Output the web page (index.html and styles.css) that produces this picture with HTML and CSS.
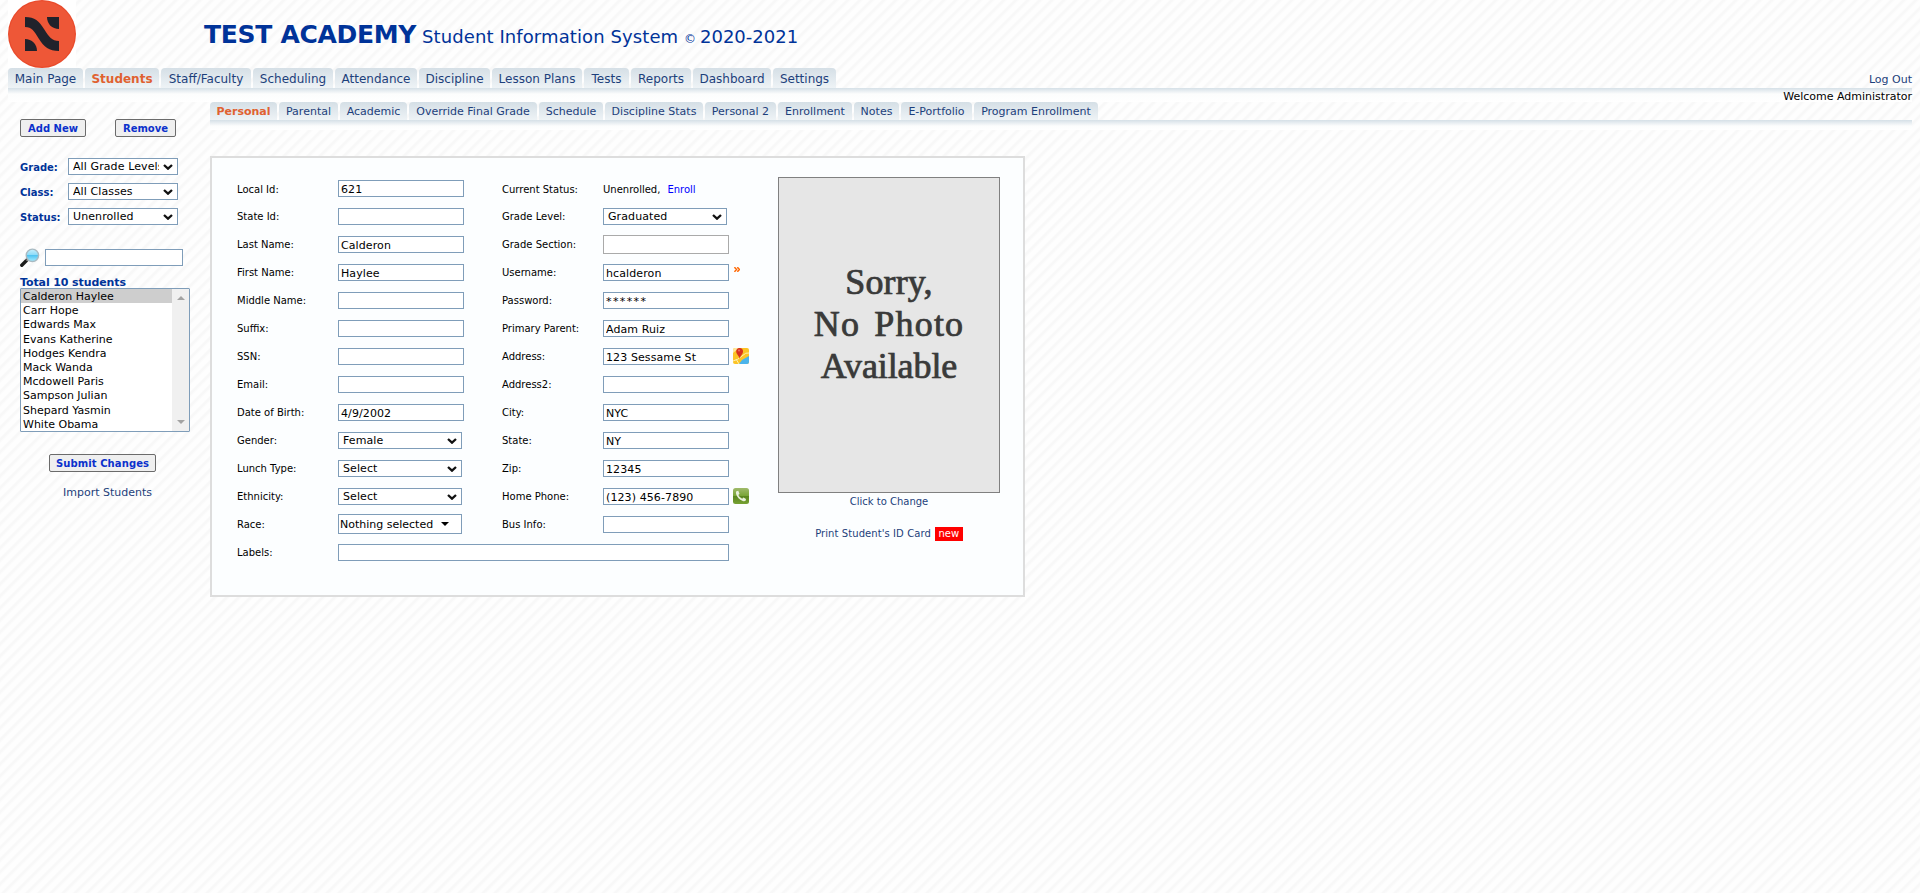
FILE: index.html
```html
<!DOCTYPE html>
<html lang="en">
<head>
<meta charset="utf-8">
<title>Student Information System</title>
<link rel="stylesheet" href="styles.css">
</head>
<body>
<svg class="defs" width="0" height="0">
  <symbol id="chev" viewBox="0 0 10 6"><path d="M1 1l4 3.7L9 1" fill="none" stroke="#111" stroke-width="2.3"/></symbol>
</svg>
<header class="header">
  <svg class="logo" width="68" height="68" viewBox="0 0 68 68">
    <circle cx="34" cy="34" r="34" fill="#e94a2b"/><circle cx="34" cy="34" r="32.8" fill="#ee5737"/>
    <path d="M17 17C27 17 31 21 36 29C41 37 44 41 51 41V51C41 51 36 47 31 39C26 31 24 27 17 27Z" fill="#20222b"/>
    <path d="M39 17H51V29C44 29 39 24 39 17Z" fill="#20222b"/>
    <path d="M17 39C24 39 29 44 29 51H17Z" fill="#20222b"/>
  </svg>
  <div class="title"><span class="school">TEST ACADEMY</span><span class="system">Student Information System</span><span class="copy">©</span><span class="year">2020-2021</span></div>
</header>
<nav class="mainnav">
  <a class="w75">Main Page</a><a class="w74 on">Students</a><a class="w90">Staff/Faculty</a><a class="w80">Scheduling</a><a class="w82">Attendance</a><a class="w71">Discipline</a><a class="w90">Lesson Plans</a><a class="w45">Tests</a><a class="w60">Reports</a><a class="w78">Dashboard</a><a class="w63">Settings</a>
  <span class="logout">Log Out</span>
</nav>
<div class="mainline"><span>Welcome Administrator</span></div>
<div class="body">
  <aside class="side">
    <div class="buttons"><button class="w66">Add New</button><button class="w61">Remove</button></div>
    <div class="filter"><label>Grade:</label><div class="sel w110"><select><option>All Grade Levels</option></select><svg><use href="#chev"/></svg></div></div>
    <div class="filter"><label>Class:</label><div class="sel w110"><select><option>All Classes</option></select><svg><use href="#chev"/></svg></div></div>
    <div class="filter"><label>Status:</label><div class="sel w110"><select><option>Unenrolled</option></select><svg><use href="#chev"/></svg></div></div>
    <div class="search">
      <svg width="20" height="20" viewBox="0 0 20 20">
        <defs><linearGradient id="lens" x1="0" y1="0" x2="0" y2="1"><stop offset="0" stop-color="#c8effc"/><stop offset=".45" stop-color="#8fdcf8"/><stop offset=".5" stop-color="#4fc3f1"/><stop offset="1" stop-color="#a5ecff"/></linearGradient></defs>
        <path d="M1.8 17.2L7 12" stroke="#1c1c1c" stroke-width="3.4" stroke-linecap="round"/>
        <path d="M5.5 11.5L8 13" stroke="#999" stroke-width="1"/>
        <circle cx="12.4" cy="7.3" r="6.2" fill="url(#lens)" stroke="#a9bac2" stroke-width="1.4"/>
      </svg>
      <input type="text">
    </div>
    <div class="total">Total 10 students</div>
    <div class="list">
      <ul><li class="picked">Calderon Haylee</li><li>Carr Hope</li><li>Edwards Max</li><li>Evans Katherine</li><li>Hodges Kendra</li><li>Mack Wanda</li><li>Mcdowell Paris</li><li>Sampson Julian</li><li>Shepard Yasmin</li><li>White Obama</li></ul>
      <div class="bar"><svg width="8" height="4"><path d="M0 4L4 0L8 4Z" fill="#a3a3a3"/></svg><svg width="8" height="4"><path d="M0 0L4 4L8 0Z" fill="#a3a3a3"/></svg></div>
    </div>
    <button class="submit">Submit Changes</button>
    <div class="import">Import Students</div>
  </aside>
  <main class="main">
    <nav class="subnav">
      <a class="w67 on">Personal</a><a class="w59">Parental</a><a class="w67">Academic</a><a class="w128">Override Final Grade</a><a class="w64">Schedule</a><a class="w98">Discipline Stats</a><a class="w71">Personal 2</a><a class="w74">Enrollment</a><a class="w45">Notes</a><a class="w71">E-Portfolio</a><a class="w124">Program Enrollment</a>
    </nav>
    <div class="subline"></div>
    <section class="panel">
      <div class="form">
        <div class="cols">
          <div class="col">
            <div class="row first"><label>Local Id:</label><input type="text" value="621"></div>
            <div class="row"><label>State Id:</label><input type="text"></div>
            <div class="row"><label>Last Name:</label><input type="text" value="Calderon"></div>
            <div class="row"><label>First Name:</label><input type="text" value="Haylee"></div>
            <div class="row"><label>Middle Name:</label><input type="text"></div>
            <div class="row"><label>Suffix:</label><input type="text"></div>
            <div class="row"><label>SSN:</label><input type="text"></div>
            <div class="row"><label>Email:</label><input type="text"></div>
            <div class="row"><label>Date of Birth:</label><input type="text" value="4/9/2002"></div>
            <div class="row"><label>Gender:</label><div class="sel w124"><select><option>Female</option></select><svg><use href="#chev"/></svg></div></div>
            <div class="row"><label>Lunch Type:</label><div class="sel w124"><select><option>Select</option></select><svg><use href="#chev"/></svg></div></div>
            <div class="row"><label>Ethnicity:</label><div class="sel w124"><select><option>Select</option></select><svg><use href="#chev"/></svg></div></div>
            <div class="row"><label>Race:</label><div class="multi"><span>Nothing selected</span><svg width="8" height="4"><path d="M0 0H8L4 4Z" fill="#000"/></svg></div></div>
          </div>
          <div class="col">
            <div class="row first"><label>Current Status:</label><span class="status">Unenrolled,<a>Enroll</a></span></div>
            <div class="row"><label>Grade Level:</label><div class="sel w124"><select><option>Graduated</option></select><svg><use href="#chev"/></svg></div></div>
            <div class="row"><label>Grade Section:</label><input type="text" class="section"></div>
            <div class="row"><label>Username:</label><input type="text" value="hcalderon"><svg class="more" width="6" height="5" viewBox="0 0 6 5"><path d="M.4 .2L2.5 2.5L.4 4.8M3.3 .2L5.4 2.5L3.3 4.8" fill="none" stroke="#f60" stroke-width="1.5"/></svg></div>
            <div class="row"><label>Password:</label><input type="text" class="stars" value="******"></div>
            <div class="row"><label>Primary Parent:</label><input type="text" value="Adam Ruiz"></div>
            <div class="row"><label>Address:</label><input type="text" value="123 Sessame St">
              <svg class="icon" width="16" height="16" viewBox="0 0 16 16"><rect width="16" height="16" rx="2" fill="#fcc425"/><path d="M0 5V2Q0 0 2 0H6Z" fill="#ffe79c"/><path d="M9 12L16 8V14Q16 16 14 16H6Z" fill="#4ab4ec"/><path d="M0 13Q5 12 9 8T16 5M6 16L3 11" stroke="#fff0ae" stroke-width="1" fill="none"/><path d="M6.600 11C6.400 8 3.200 6.500 3.200 3.600A3.400 3.600 0 0 1 10 3.600C10 6.500 6.900 8 6.600 11Z" fill="#d8321e"/><circle cx="6" cy="2.500" r="1" fill="#ec7263"/></svg></div>
            <div class="row"><label>Address2:</label><input type="text"></div>
            <div class="row"><label>City:</label><input type="text" value="NYC"></div>
            <div class="row"><label>State:</label><input type="text" value="NY"></div>
            <div class="row"><label>Zip:</label><input type="text" value="12345"></div>
            <div class="row"><label>Home Phone:</label><input type="text" value="(123) 456-7890">
              <svg class="icon" width="16" height="16" viewBox="0 0 16 16"><defs><linearGradient id="gr" x1="0" y1="0" x2="0" y2="1"><stop offset="0" stop-color="#9fba6b"/><stop offset=".5" stop-color="#78a435"/><stop offset=".52" stop-color="#5a851f"/><stop offset="1" stop-color="#77a233"/></linearGradient></defs><rect width="16" height="16" rx="2.500" fill="url(#gr)"/><path d="M3.300 3.200L5.300 2.800L6.500 5.700L5.300 6.900Q6.500 9.500 9.200 10.800L10.400 9.600L13 11L12.600 12.800Q11.500 13.500 9.700 12.900Q4.600 11 3.100 6Q2.700 4.200 3.300 3.200Z" fill="#e9f0dc"/></svg></div>
            <div class="row"><label>Bus Info:</label><input type="text"></div>
          </div>
        </div>
        <div class="row"><label>Labels:</label><input type="text" class="wide"></div>
      </div>
      <div class="photocol">
        <div class="photo"><span class="p1">Sorry,</span><span class="p2">No Photo</span><span class="p3">Available</span></div>
        <a class="change">Click to Change</a>
        <div class="print"><a>Print Student's ID Card</a><span>new</span></div>
      </div>
    </section>
  </main>
</div>
</body>
</html>
```
FILE: styles.css
```css
* { box-sizing: border-box; }
body {
  margin: 0;
  padding: 0 8px;
  height: 893px;
  overflow: hidden;
  font: 11px "DejaVu Sans", Verdana, sans-serif;
  color: #000;
  background: #fefefe repeating-linear-gradient(135deg, #fefefe 0, #fefefe 3.5px, #f8f8f8 5px, #f8f8f8 6.2px, #fefefe 8.485px);
}
.defs { position: absolute; }
.header { display: flex; height: 68px; }
.logo { background: #fff; }
.title { display: flex; align-items: baseline; margin-left: 128px; padding-top: 20px; height: 60px; line-height: 30px; color: #039; white-space: nowrap; }
.school { font-size: 25px; font-weight: bold; letter-spacing: -0.3px; width: 218px; }
.system { font-size: 18px; letter-spacing: 0.1px; width: 262px; }
.copy { font-size: 12px; width: 16px; }
.year { font-size: 18px; }

.mainnav, .subnav { display: flex; gap: 2px; color: #1d3f7b; }
.mainnav { height: 20px; font-size: 12px; line-height: 22px; }
.subnav { height: 18px; line-height: 20px; }
.mainnav a, .subnav a {
  flex: none;
  text-align: center;
  white-space: nowrap;
  border-radius: 4px 4px 0 0;
  background: linear-gradient(#d5dfe6, #eef3f6);
}
.mainnav .on, .subnav .on { color: #e06130; font-weight: bold; }
.logout { margin-left: auto; font-size: 11px; line-height: 23px; }
.mainline { height: 14px; text-align: right; line-height: 17px; background: linear-gradient(#d5e0e7, #fcfdfd 6px, #fff); }
.subline { height: 10px; background: linear-gradient(#d5e0e7, #fcfdfd 6px, #fff); }

.body { display: flex; }
.side { width: 202px; padding: 17px 0 0 12px; }
.main { flex: 1; }
.buttons { display: flex; gap: 29px; margin-bottom: 21px; }
button {
  height: 18px;
  padding: 1px 0 0;
  border: 1px solid #6b6b6b;
  border-radius: 2px;
  background: #efefef;
  color: #0b31cc;
  font: bold 10px/16px "DejaVu Sans", Verdana, sans-serif;
}
.filter { display: flex; height: 25px; }
.filter label { width: 48px; font-size: 10px; font-weight: bold; line-height: 20px; color: #039; }
.sel { display: flex; align-items: center; height: 17px; border: 1px solid #7f9db9; background: #fff; }
.sel select {
  appearance: none;
  flex: 1;
  min-width: 0;
  height: 15px;
  border: 0;
  padding: 0 0 0 4px;
  background: none;
  color: #000;
  font: 11px/15px "DejaVu Sans", Verdana, sans-serif;
  letter-spacing: 0.1px;
}
.sel svg { flex: none; width: 10px; height: 6px; margin: 0 4px; }
input {
  width: 126px;
  height: 17px;
  padding: 1px 2px 0;
  border: 1px solid #7f9db9;
  border-radius: 0;
  background: #fff;
  color: #000;
  font: 11px/14px "DejaVu Sans", Verdana, sans-serif;
  letter-spacing: 0.1px;
}
.stars { letter-spacing: 1.4px; }
.search { display: flex; gap: 5px; margin-top: 15px; height: 27px; }
.search input { width: 138px; margin-top: 1px; }
.total { height: 13px; line-height: 15px; font-weight: bold; color: #039; letter-spacing: -0.1px; }
.list { display: flex; width: 170px; height: 144px; border: 1px solid #7f9db9; border-radius: 1px; background: #fff; }
.list ul { flex: 1; margin: 0; padding: 0; list-style: none; }
.list li { height: 14.2px; line-height: 15.6px; padding-left: 2px; }
.list .picked { background: #cecece; }
.bar { display: flex; flex-direction: column; justify-content: space-between; align-items: center; width: 17px; padding: 7px 0; background: #f0f0f0; }
.submit { display: block; width: 107px; margin: 22px 0 0 29px; letter-spacing: 0.1px; }
.import { margin: 12px 0 0 43px; line-height: 18px; color: #1d3f7b; }

.panel { display: flex; width: 815px; height: 441px; margin-top: 26px; padding: 19px 0 0 25px; border: 2px solid #ddd; background: #fcfeff; font-size: 10px; }
.form { padding-top: 3px; width: 541px; }
.cols { display: flex; gap: 38px; }
.row { display: flex; height: 28px; }
.row label { flex: none; width: 101px; line-height: 17px; }
.first label, .status { line-height: 19px; }
.status a { color: #00f; margin-left: 7px; }
.row .section { height: 19px; margin-top: -1px; border-color: #aaa; }
.row .wide { width: 391px; }
.more { margin: 3px 0 0 5px; }
.icon { margin-left: 4px; }
.multi { display: flex; align-items: center; gap: 8px; width: 124px; height: 20px; margin-top: -2px; padding-left: 1px; border: 1px solid #7f9db9; background: #fff; font-size: 11px; white-space: nowrap; }
.photocol { display: flex; flex-direction: column; align-items: center; width: 222px; color: #1d3f7b; }
.photo {
  display: flex;
  flex-direction: column;
  align-items: center;
  width: 222px;
  height: 316px;
  padding-top: 83px;
  border: 1px solid #808080;
  background: #e6e6e6;
  color: #3a3a3a;
  font: 36px/42px "Liberation Serif", serif;
  -webkit-text-stroke: 0.6px #3a3a3a;
  text-shadow: 0 0 1px #777;
  white-space: nowrap;
}
.p1 { letter-spacing: 0.1px; }
.p2 { letter-spacing: 1.2px; word-spacing: 4px; }
.p3 { letter-spacing: -0.1px; }
.change { line-height: 17px; }
.print { display: flex; gap: 4px; margin-top: 17px; line-height: 14px; white-space: nowrap; letter-spacing: 0.08px; }
.print span { width: 28px; height: 14px; background: #f00; color: #fff; text-align: center; }
.w45 { width: 45px; }
.w59 { width: 59px; }
.w60 { width: 60px; }
.w61 { width: 61px; }
.w63 { width: 63px; }
.w64 { width: 64px; }
.w66 { width: 66px; }
.w67 { width: 67px; }
.w71 { width: 71px; }
.w74 { width: 74px; }
.w75 { width: 75px; }
.w78 { width: 78px; }
.w80 { width: 80px; }
.w82 { width: 82px; }
.w90 { width: 90px; }
.w98 { width: 98px; }
.w110 { width: 110px; }
.w124 { width: 124px; }
.w128 { width: 128px; }
```
